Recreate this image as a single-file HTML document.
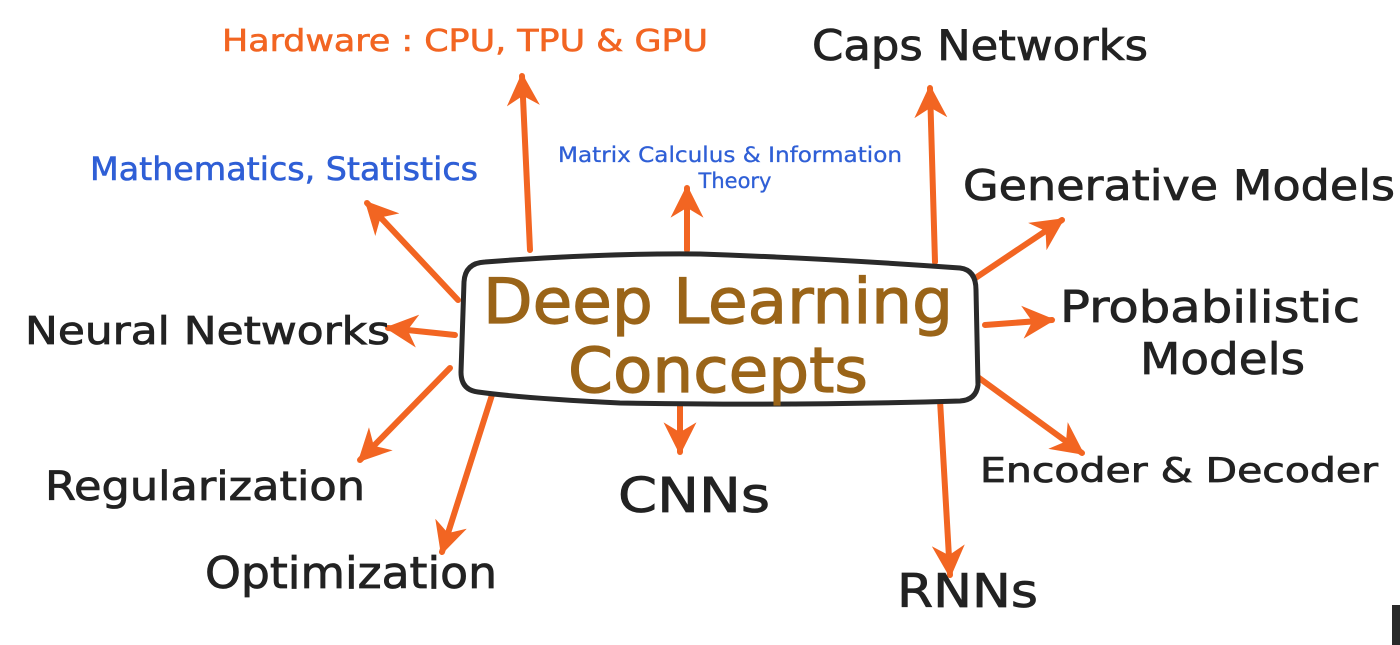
<!DOCTYPE html>
<html><head><meta charset="utf-8"><style>
html,body{margin:0;padding:0;background:#fff;}
svg{display:block}
text{font-family:"DejaVu Sans","Liberation Sans",sans-serif;}
</style></head><body>
<svg width="1400" height="645" viewBox="0 0 1400 645" xmlns="http://www.w3.org/2000/svg">
<defs>
<marker id="ah" viewBox="0 0 10 10" refX="9" refY="5" markerWidth="5.5" markerHeight="5.5" orient="auto" markerUnits="strokeWidth">
<path d="M0,0 L10,5 L0,10 L3,5 Z" fill="#f26522"/>
</marker>
</defs>
<g stroke="#f26522" stroke-width="6" stroke-linecap="round" marker-end="url(#ah)" fill="none">
<line x1="530" y1="250" x2="522" y2="76"/>
<line x1="458" y1="300" x2="367" y2="203"/>
<line x1="687" y1="250" x2="687" y2="188"/>
<line x1="935" y1="262" x2="930" y2="88"/>
<line x1="965" y1="285" x2="1062" y2="220"/>
<line x1="985" y1="325" x2="1052" y2="320"/>
<line x1="455" y1="335" x2="388" y2="328"/>
<line x1="450" y1="368" x2="360" y2="460"/>
<line x1="492" y1="395" x2="442" y2="552"/>
<line x1="680" y1="405" x2="680" y2="452"/>
<line x1="975" y1="375" x2="1082" y2="453"/>
<line x1="940" y1="400" x2="950" y2="575"/>
</g>
<path d="M485,262 Q600,253 700,254 Q820,258 960,268 Q976,270 976,290 L978,385 Q976,400 960,401 Q800,406 620,403 Q520,398 478,392 Q461,390 461,372 L464,282 Q465,263 485,262 Z" fill="#fff" stroke="#2a2a2a" stroke-width="5"/>
<g fill="#9a6418" stroke="#9a6418" stroke-width="1.2" font-size="62" text-anchor="middle">
<text x="718" y="323" textLength="470" lengthAdjust="spacingAndGlyphs">Deep Learning</text>
<text x="718" y="392" textLength="300" lengthAdjust="spacingAndGlyphs">Concepts</text>
</g>
<text x="222" y="51" font-size="30" fill="#f26522" stroke="#f26522" stroke-width="0.6" textLength="486" lengthAdjust="spacingAndGlyphs">Hardware : CPU, TPU  &amp; GPU</text>
<g fill="#2f5fd6" stroke="#2f5fd6" stroke-width="0.6">
<text x="90" y="180" font-size="32" textLength="388" lengthAdjust="spacingAndGlyphs">Mathematics, Statistics</text>
<text x="558" y="162" font-size="21" stroke-width="0.3" textLength="344" lengthAdjust="spacingAndGlyphs">Matrix Calculus &amp; Information</text>
<text x="735" y="188" font-size="21" stroke-width="0.3" text-anchor="middle">Theory</text>
</g>
<g fill="#222" stroke="#222" stroke-width="0.8">
<text x="812" y="60" font-size="42" textLength="336" lengthAdjust="spacingAndGlyphs">Caps Networks</text>
<text x="963" y="200" font-size="42" textLength="432" lengthAdjust="spacingAndGlyphs">Generative Models</text>
<text x="1060" y="322" font-size="44" textLength="300" lengthAdjust="spacingAndGlyphs">Probabilistic</text>
<text x="1140" y="374" font-size="44" textLength="165" lengthAdjust="spacingAndGlyphs">Models</text>
<text x="25" y="344" font-size="38" textLength="365" lengthAdjust="spacingAndGlyphs">Neural Networks</text>
<text x="980" y="482" font-size="34" textLength="398" lengthAdjust="spacingAndGlyphs">Encoder &amp; Decoder</text>
<text x="45" y="500" font-size="40" textLength="320" lengthAdjust="spacingAndGlyphs">Regularization</text>
<text x="618" y="512" font-size="48" textLength="152" lengthAdjust="spacingAndGlyphs">CNNs</text>
<text x="205" y="588" font-size="44" textLength="292" lengthAdjust="spacingAndGlyphs">Optimization</text>
<text x="897" y="607" font-size="46" textLength="141" lengthAdjust="spacingAndGlyphs">RNNs</text>
</g>
<rect x="1392" y="605" width="8" height="40" fill="#2a2a2a"/>
</svg>
</body></html>
